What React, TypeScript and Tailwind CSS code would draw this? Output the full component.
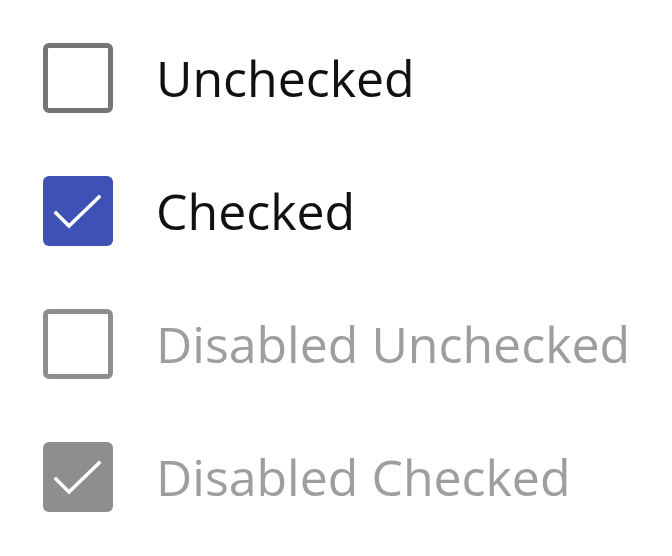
import React from "react";

function Check() {
  return (
    <svg width="70" height="70" viewBox="0 0 70 70" className="absolute inset-0">
      <path d="M13 37 L26 50 L56 21" fill="none" stroke="white" strokeWidth="3.5" strokeLinecap="square" />
    </svg>
  );
}

export default function App() {
  const rows = [
    { label: "Unchecked", checked: false, disabled: false },
    { label: "Checked", checked: true, disabled: false },
    { label: "Disabled Unchecked", checked: false, disabled: true },
    { label: "Disabled Checked", checked: true, disabled: true },
  ];
  return (
    <div className="w-[672px] h-[556px] bg-white pt-[43px] pl-[43px] flex flex-col gap-[63px]" style={{ fontFamily: '"Open Sans", sans-serif' }}>
      {rows.map((r) => (
        <div key={r.label} className="flex items-center h-[70px]">
          {r.checked ? (
            <div className={`relative w-[70px] h-[70px] rounded-[6px] shrink-0 ${r.disabled ? "bg-[#8e8e8e]" : "bg-[#3f51b5]"}`}>
              <Check />
            </div>
          ) : (
            <div className={`w-[70px] h-[70px] rounded-[6px] shrink-0 border-[5px] ${r.disabled ? "border-[#8e8e8e]" : "border-[#757575]"}`} />
          )}
          <span className={`ml-[43px] text-[50px] leading-none whitespace-nowrap ${r.disabled ? "text-[#9e9e9e]" : "text-[#111]"}`}>
            {r.label}
          </span>
        </div>
      ))}
    </div>
  );
}
